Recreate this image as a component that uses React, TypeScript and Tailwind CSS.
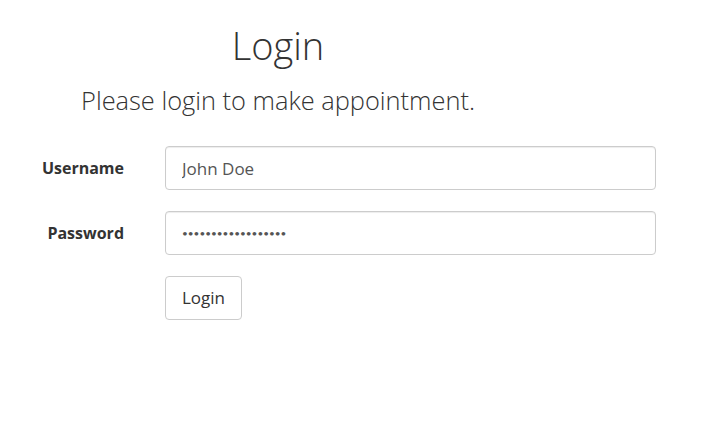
export default function App() {
  return (
    <div className="min-h-[433px] bg-white font-['Open_Sans','Lato',sans-serif] text-[#333]">
      <div className="w-[556px] pt-[20px] text-center">
        <h1 className="text-[38px] font-light leading-[50px] text-[#333]">Login</h1>
        <p className="mt-[13px] text-[25.4px] font-light leading-[34px] text-[#333]">
          Please login to make appointment.
        </p>
      </div>

      <form className="mt-[29px] flex flex-col gap-[21px]">
        <div className="flex items-center">
          <label className="w-[125px] pr-px text-right text-[16px] font-bold text-[#333]">Username</label>
          <input
            type="text"
            defaultValue="John Doe"
            className="ml-[40px] h-[44px] w-[491px] rounded-[4px] border border-[#ccc] px-[16px] text-[17px] text-[#555] shadow-[inset_0_1px_1px_rgba(0,0,0,0.075)] outline-none"
          />
        </div>
        <div className="flex items-center">
          <label className="w-[125px] pr-px text-right text-[16px] font-bold text-[#333]">Password</label>
          <input
            type="password"
            defaultValue="ThisIsNotAPassword"
            className="ml-[40px] h-[44px] w-[491px] rounded-[4px] border border-[#ccc] px-[16px] font-['Lato',sans-serif] text-[10px] text-[#555] shadow-[inset_0_1px_1px_rgba(0,0,0,0.075)] outline-none"
          />
        </div>
        <div className="flex pl-[165px]">
          <button
            type="button"
            className="h-[44px] w-[77px] rounded-[4px] border border-[#ccc] bg-white text-[17px] text-[#333]"
          >
            Login
          </button>
        </div>
      </form>
    </div>
  )
}
